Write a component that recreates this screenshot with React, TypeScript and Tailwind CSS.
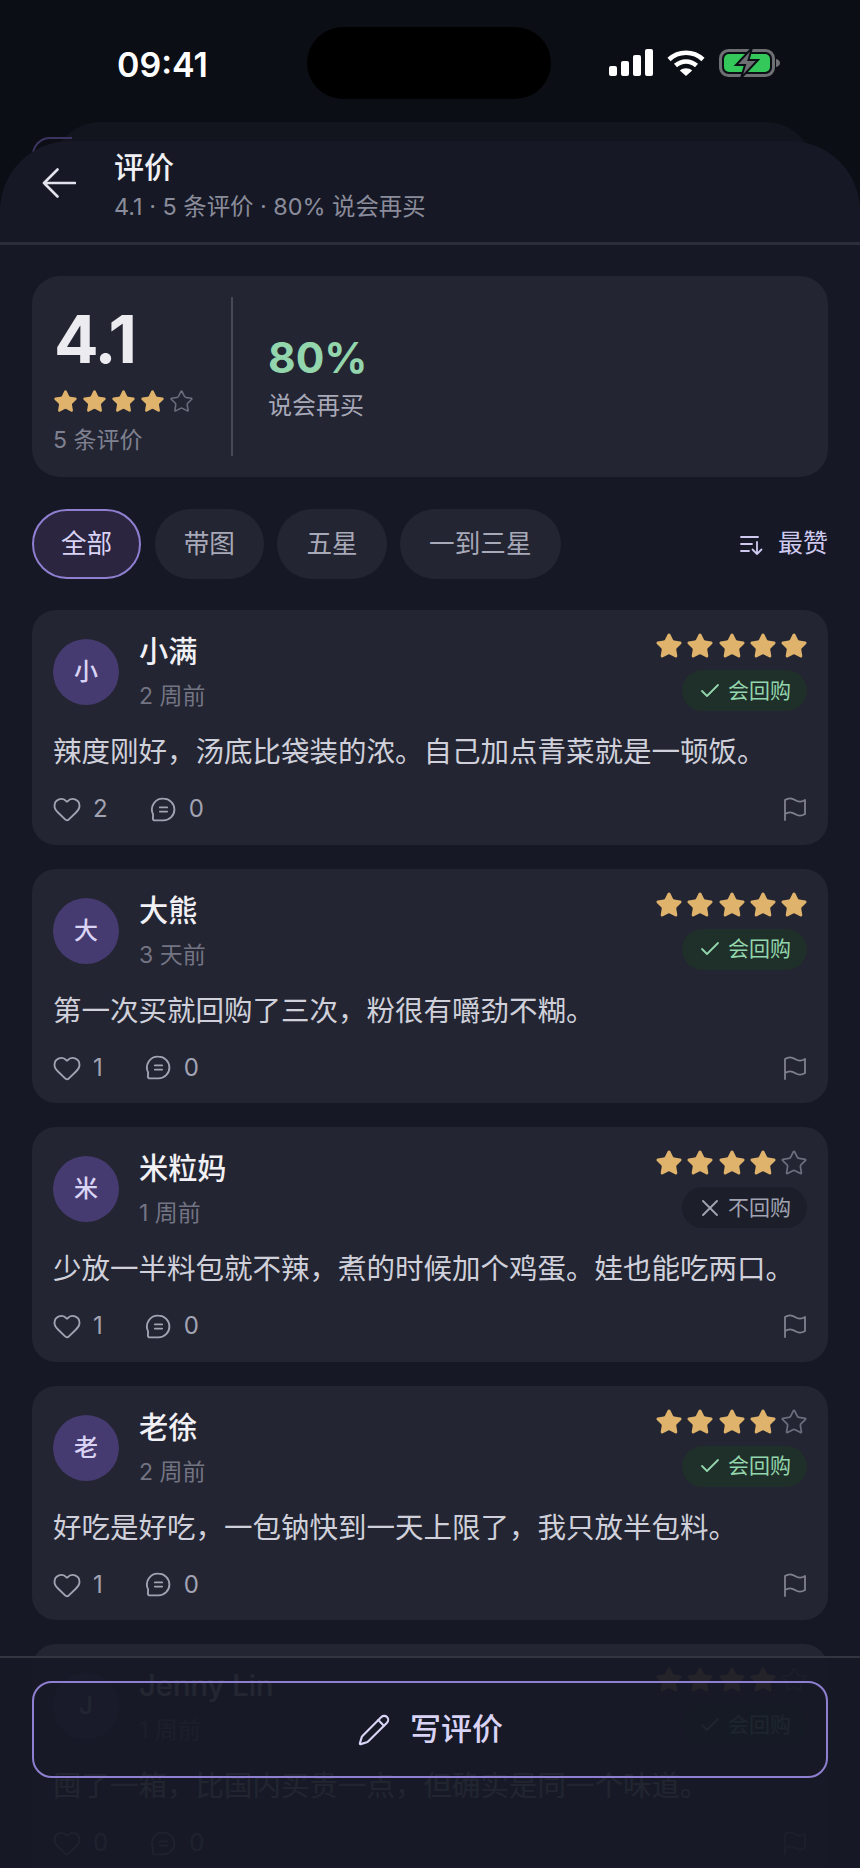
import React from 'react';
import { Check, Heart, Pencil, Star, X } from 'lucide-react';

interface Review {
  initial: string;
  name: string;
  time: string;
  stars: number;
  rebuy: boolean;
  text: string;
  likes: number;
}

const reviews: Review[] = [
  { initial: '小', name: '小满', time: '2 周前', stars: 5, rebuy: true, text: '辣度刚好，汤底比袋装的浓。自己加点青菜就是一顿饭。', likes: 2 },
  { initial: '大', name: '大熊', time: '3 天前', stars: 5, rebuy: true, text: '第一次买就回购了三次，粉很有嚼劲不糊。', likes: 1 },
  { initial: '米', name: '米粒妈', time: '1 周前', stars: 4, rebuy: false, text: '少放一半料包就不辣，煮的时候加个鸡蛋。娃也能吃两口。', likes: 1 },
  { initial: '老', name: '老徐', time: '2 周前', stars: 4, rebuy: true, text: '好吃是好吃，一包钠快到一天上限了，我只放半包料。', likes: 1 },
  { initial: 'J', name: 'Jenny Lin', time: '1 周前', stars: 4, rebuy: true, text: '囤了一箱，比国内买贵一点，但确实是同一个味道。', likes: 0 },
];

const filters = ['全部', '带图', '五星', '一到三星'];

const Stars = ({ count, size, gap }: { count: number; size: number; gap: string }) => (
  <div className={`flex ${gap}`}>
    {[0, 1, 2, 3, 4].map((i) =>
      i < count ? (
        <Star key={i} size={size} strokeWidth={1.5} className="fill-[#e0b36c] text-[#e0b36c]" />
      ) : (
        <Star key={i} size={size} strokeWidth={1.5} className="text-[#6c6d7d]" />
      ),
    )}
  </div>
);

const CommentIcon = () => (
  <svg width="27" height="27" viewBox="0 0 26 26" fill="none" stroke="#a2a3b2" strokeWidth="1.8" strokeLinecap="round" strokeLinejoin="round">
    <path d="M13 2.5a10.5 10.5 0 1 1 0 21H4.6a1.8 1.8 0 0 1-1.8-1.8l.2-4A10.5 10.5 0 0 1 13 2.5Z" />
    <path d="M9.5 11h7M9.5 15h7" />
  </svg>
);

const FlagIcon = () => (
  <svg width="24" height="24" viewBox="0 0 24 24" fill="none" stroke="#80818f" strokeWidth="1.8" strokeLinecap="round" strokeLinejoin="round">
    <path d="M2 23V3c3-2 7-2 10 0s7 2 10 0v14c-3 2-7 2-10 0s-7-2-10 0" />
  </svg>
);

const ReviewCard = ({ review }: { review: Review }) => (
  <div className="h-[234.5px] shrink-0 rounded-[24px] bg-[#232532] px-[21px] pt-[22px]">
    <div className="flex items-start justify-between">
      <div className="flex gap-[20px]">
        <div className="mt-[7px] flex h-[66px] w-[66px] items-center justify-center rounded-full bg-[#463b70] text-[24px] font-medium text-[#d9d3f5]">
          {review.initial}
        </div>
        <div className="pt-[1px]">
          <div className="text-[29.2px] leading-[38px] font-medium text-[#f1f0f5]">{review.name}</div>
          <div className="mt-[9px] text-[23px] leading-[32px] text-[#737483]">{review.time}</div>
        </div>
      </div>
      <div className="flex flex-col items-end">
        <div className="-mr-[1px]">
          <Stars count={review.stars} size={28} gap="gap-[3.2px]" />
        </div>
        {review.rebuy ? (
          <div className="mt-[10px] flex h-[41px] w-[125px] items-center justify-center gap-[6px] rounded-full bg-[#1f2f29] text-[21px] text-[#93d5ac]">
            <Check size={24} strokeWidth={1.8} />
            <span>会回购</span>
          </div>
        ) : (
          <div className="mt-[10px] flex h-[41px] w-[125px] items-center justify-center gap-[6px] rounded-full bg-[#1c1e2a] text-[21px] text-[#a2a3b2]">
            <X size={28} strokeWidth={1.6} className="-mx-[2px]" />
            <span>不回购</span>
          </div>
        )}
      </div>
    </div>
    <p className="mt-[20px] text-[28.5px] leading-[40px] whitespace-nowrap text-[#cfd0da]">{review.text}</p>
    <div className="mt-[22px] flex items-center justify-between text-[24px] leading-[30px] text-[#a2a3b2]">
      <div className="flex items-center">
        <Heart size={30} strokeWidth={1.5} className="-ml-[1px] text-[#a2a3b2]" />
        <span className="ml-[11px]">{review.likes}</span>
        <span className="ml-[42px]">
          <CommentIcon />
        </span>
        <span className="ml-[12px]">0</span>
      </div>
      <FlagIcon />
    </div>
  </div>
);

export default function App() {
  return (
    <div className="relative flex h-[1868px] w-[860px] flex-col overflow-hidden bg-[#0b0e14] font-['Inter','Noto_Sans_CJK_SC',sans-serif]">
      {/* status bar */}
      <div className="flex h-[141px] shrink-0 items-start justify-between pt-[42px] pr-[79px] pl-[117px]">
        <span className="text-[34px] leading-[46px] font-semibold text-white">09:41</span>
        <div className="flex items-center gap-[14px] pt-[6px]">
          <svg width="44" height="28" viewBox="0 0 44 28" fill="#fff">
            <rect x="0" y="17" width="8" height="10" rx="2" />
            <rect x="12" y="12" width="8" height="15" rx="2" />
            <rect x="24" y="6" width="8" height="21" rx="2" />
            <rect x="36" y="0" width="8" height="27" rx="2" />
          </svg>
          <svg width="38" height="28" viewBox="0 0 38 28" fill="none" stroke="#fff" strokeWidth="4.5">
            <path d="M2 10.5C11.5 1.5 26.5 1.5 36 10.5" />
            <path d="M8.5 16.5C14.5 11 23.5 11 29.5 16.5" />
            <path d="M19 27 12.8 21.5C16.5 18.5 21.5 18.5 25.2 21.5Z" fill="#fff" stroke="none" />
          </svg>
          <svg width="62" height="30" viewBox="0 0 62 30">
            <rect x="1.5" y="2.5" width="53" height="25" rx="8" fill="none" stroke="#6e6f73" strokeWidth="3" />
            <rect x="5" y="6" width="46" height="18" rx="5" fill="#34c759" />
            <path d="M57 11c2.5.5 4 2 4 4s-1.5 3.500-4 4Z" fill="#6e6f73" />
            <path d="M33 0 17 17h9l-4 13 17-18h-9.500Z" fill="#6e6f73" stroke="#0b0e14" strokeWidth="2" />
          </svg>
        </div>
      </div>

      {/* dynamic island */}
      <div className="absolute top-[27px] left-[307px] h-[72px] w-[244px] rounded-[36px] bg-black" />

      {/* previous sheet peeking out behind */}
      <div className="absolute top-[122px] left-[52px] h-[60px] w-[762px] rounded-t-[48px] bg-[#12141e]" />
      <div className="absolute top-[137px] left-[32px] h-[40px] w-[40px] rounded-tl-[18px] border-t-2 border-l-2 border-[#3a3560]" />

      {/* sheet */}
      <div className="relative flex flex-1 flex-col overflow-hidden rounded-t-[70px] bg-[#161925]">
        <div className="flex h-[104px] shrink-0 items-start border-b-[3px] border-[#2b2d3a] pt-[6px] pl-[42px]">
          <svg width="34" height="30" viewBox="0 0 34 30" fill="none" stroke="#e2e2ec" strokeWidth="2.6" strokeLinecap="round" strokeLinejoin="round" className="mt-[21px]">
            <path d="M33 15H2M15.500 1.500 2 15l13.500 13.500" />
          </svg>
          <div className="ml-[38px]">
            <div className="text-[30px] leading-[40px] font-medium text-[#f1f0f5]">评价</div>
            <div className="mt-[4px] text-[23.4px] leading-[32px] text-[#8b8c9b]">4.1 · 5 条评价 · 80% 说会再买</div>
          </div>
        </div>

        <div className="flex flex-col px-[32px] pt-[31px]">
          {/* summary */}
          <div className="flex h-[201px] items-center rounded-[28px] bg-[#232532] pl-[22px]">
            <div className="w-[177px] shrink-0 pt-[6px]">
              <div className="text-[66px] leading-[72px] font-bold tracking-[-2px] text-[#ecebf0]">4.1</div>
              <div className="mt-[14px] -ml-[1px]">
                <Stars count={4} size={25} gap="gap-[4px]" />
              </div>
              <div className="mt-[10px] -ml-[1px] text-[23px] leading-[32px] text-[#7f8090]">5 条评价</div>
            </div>
            <div className="h-[159px] w-[2px] bg-[#474957]" />
            <div className="ml-[35px]">
              <div className="text-[42.5px] leading-[54px] font-bold text-[#93d5ac]">80%</div>
              <div className="mt-[4px] text-[24px] leading-[34px] text-[#a8a9b8]">说会再买</div>
            </div>
          </div>

          {/* filters */}
          <div className="mt-[32px] flex items-center justify-between">
            <div className="flex gap-[13.5px]">
              {filters.map((f, i) =>
                i === 0 ? (
                  <button key={f} className="h-[70px] rounded-full border-2 border-[#8f7fd0] bg-[#2b2540] px-[27px] text-[25.6px] text-[#d9d3f5]">
                    {f}
                  </button>
                ) : (
                  <button key={f} className="h-[70px] rounded-full bg-[#232532] px-[29px] text-[25.6px] text-[#a8a9b8]">
                    {f}
                  </button>
                ),
              )}
            </div>
            <div className="flex items-center gap-[15px] text-[25px] text-[#cfc9f0]">
              <svg width="24" height="24" viewBox="0 0 24 24" fill="none" stroke="#cfc9f0" strokeWidth="1.8" strokeLinecap="round" strokeLinejoin="round">
                <path d="M2 5h17M2 12h11M2 19h8" />
                <path d="M18 10v12M13.500 17.500 18 22l4.500-4.500" />
              </svg>
              <span>最赞</span>
            </div>
          </div>

          {/* reviews */}
          <div className="mt-[31px] flex flex-col gap-[24px]">
            {reviews.map((r) => (
              <ReviewCard key={r.name} review={r} />
            ))}
          </div>
        </div>

        {/* write button */}
        <div className="absolute right-0 bottom-0 left-0 h-[212px] border-t-2 border-[#33353f] bg-[#161925]/94 px-[32px] pt-[23px]">
          <button className="flex h-[97px] w-full items-center justify-center gap-[19px] rounded-[20px] border-2 border-[#8f7fd0] text-[31px] font-medium text-[#d9d3f5]">
            <Pencil size={34} strokeWidth={1.5} />
            <span>写评价</span>
          </button>
        </div>
      </div>
    </div>
  );
}
